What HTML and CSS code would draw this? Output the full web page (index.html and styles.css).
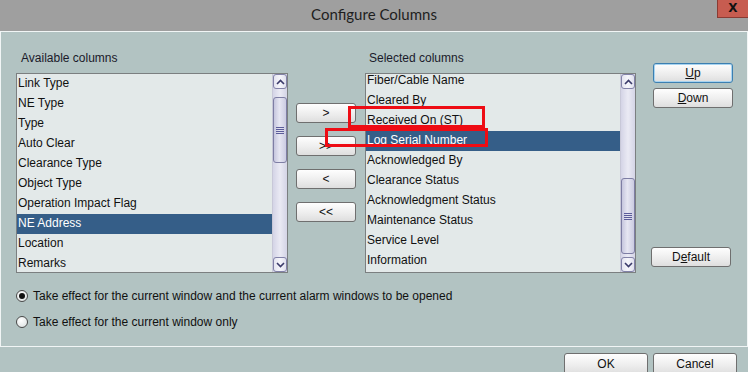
FILE: index.html
```html
<!DOCTYPE html>
<html lang="en">
<head>
  <meta charset="UTF-8">
  <title>Configure Columns</title>
  <link rel="stylesheet" href="styles.css">
</head>
<body>
  <div class="titlebar">
    <span class="title">Configure Columns</span>
    <div class="close-btn">X</div>
  </div>

  <div class="panel">
    <div class="columns">
      <div class="label label-left">Available columns</div>
      <div class="label label-right">Selected columns</div>

      <div class="listbox list-left">
        <ul class="items">
          <li>Link Type</li>
          <li>NE Type</li>
          <li>Type</li>
          <li>Auto Clear</li>
          <li>Clearance Type</li>
          <li>Object Type</li>
          <li>Operation Impact Flag</li>
          <li class="selected">NE Address</li>
          <li>Location</li>
          <li>Remarks</li>
        </ul>
        <div class="scrollbar">
          <div class="arrow">
            <svg width="9" height="6" viewBox="0 0 9 6"><polyline points="1,5 4.5,1.5 8,5" fill="none" stroke="#3a3a6a" stroke-width="1.6"/></svg>
          </div>
          <div class="track">
            <div class="thumb thumb-left"><span class="grip"></span></div>
          </div>
          <div class="arrow">
            <svg width="9" height="6" viewBox="0 0 9 6"><polyline points="1,1 4.5,4.5 8,1" fill="none" stroke="#3a3a6a" stroke-width="1.6"/></svg>
          </div>
        </div>
      </div>

      <div class="move-buttons">
        <button class="btn">&gt;</button>
        <button class="btn">&gt;&gt;</button>
        <button class="btn">&lt;</button>
        <button class="btn">&lt;&lt;</button>
      </div>

      <div class="listbox list-right">
        <ul class="items scrolled">
          <li>Fiber/Cable Name</li>
          <li>Cleared By</li>
          <li>Received On (ST)</li>
          <li class="selected">Log Serial Number</li>
          <li>Acknowledged By</li>
          <li>Clearance Status</li>
          <li>Acknowledgment Status</li>
          <li>Maintenance Status</li>
          <li>Service Level</li>
          <li>Information</li>
        </ul>
        <div class="scrollbar">
          <div class="arrow">
            <svg width="9" height="6" viewBox="0 0 9 6"><polyline points="1,5 4.5,1.5 8,5" fill="none" stroke="#3a3a6a" stroke-width="1.6"/></svg>
          </div>
          <div class="track">
            <div class="thumb thumb-right"><span class="grip"></span></div>
          </div>
          <div class="arrow">
            <svg width="9" height="6" viewBox="0 0 9 6"><polyline points="1,1 4.5,4.5 8,1" fill="none" stroke="#3a3a6a" stroke-width="1.6"/></svg>
          </div>
        </div>
      </div>

      <div class="side-buttons">
        <button class="btn side-btn focused"><u>U</u>p</button>
        <button class="btn side-btn"><u>D</u>own</button>
        <button class="btn side-btn default-btn">D<u>e</u>fault</button>
      </div>
    </div>

    <div class="options">
      <label class="radio-row"><span class="radio checked"></span>Take effect for the current window and the current alarm windows to be opened</label>
      <label class="radio-row"><span class="radio"></span>Take effect for the current window only</label>
    </div>
  </div>

  <div class="footer">
    <button class="btn footer-btn">OK</button>
    <button class="btn footer-btn">Cancel</button>
  </div>

  <!-- annotation boxes drawn over the screenshot -->
  <div class="mark mark-1"></div>
  <div class="mark mark-2"></div>
</body>
</html>
```

FILE: styles.css
```css
* {
  margin: 0;
  padding: 0;
  box-sizing: border-box;
}

body {
  width: 748px;
  height: 372px;
  overflow: hidden;
  position: relative;
  background: #b2c3c2;
  font-family: 'Liberation Sans', Arial, sans-serif;
  font-size: 12px;
  color: #1a1a2a;
}

.titlebar {
  height: 31px;
  background: #9f9f9f;
  display: flex;
  justify-content: center;
  align-items: center;
  position: relative;
}

.title {
  font-family: 'Lato', 'Open Sans', sans-serif;
  font-size: 15px;
  color: #1e1e1e;
  margin-top: -4px;
}

.close-btn {
  position: absolute;
  top: 0;
  right: 0;
  width: 31px;
  height: 18px;
  background: #c75c50;
  border: 1px solid #8a3b33;
  border-top: none;
  border-right: none;
  color: #111;
  font-family: 'DejaVu Sans', sans-serif;
  font-weight: bold;
  font-size: 12px;
  line-height: 17px;
  text-align: center;
}

.panel {
  height: 316px;
  border: 1px solid #f1f5f5;
  padding: 19px 0 0 15px;
}

.columns {
  display: grid;
  grid-template-columns: 272px 77px 271px 1fr;
  grid-template-rows: 22px 200px;
}

.label {
  line-height: 14px;
}

.label-left {
  grid-column: 1;
  padding-left: 5px;
}

.label-right {
  grid-column: 3;
  padding-left: 4px;
}

.listbox {
  grid-row: 2;
  display: flex;
  border: 1px solid #7b7f80;
  background: #e3e9e9;
  height: 200px;
  overflow: hidden;
}

.list-left {
  grid-column: 1;
}

.list-right {
  grid-column: 3;
}

.items {
  list-style: none;
  flex: 1;
  overflow: hidden;
}

.items.scrolled {
  margin-top: -3px;
}

.items li {
  height: 20px;
  line-height: 19px;
  padding-left: 1px;
  white-space: nowrap;
  color: #111;
}

.items li.selected {
  background: #355e88;
  color: #fff;
}

.scrollbar {
  width: 15px;
  display: flex;
  flex-direction: column;
  background: linear-gradient(90deg, #d4d4e6, #eaeaf4 50%, #d4d4e6);
  border-left: 1px solid #c8c8d8;
}

.arrow {
  height: 15px;
  border: 1px solid #8282a8;
  border-radius: 3px;
  background: linear-gradient(90deg, #e4e4f0, #f6f6fb 50%, #e0e0ee);
  display: flex;
  align-items: center;
  justify-content: center;
}

.track {
  flex: 1;
  padding-top: 8px;
}

.thumb {
  border: 1px solid #7e7ea4;
  border-radius: 3px;
  background: linear-gradient(90deg, #c6c6de, #e6e6f2 45%, #cbcbe2);
  display: flex;
  align-items: center;
  justify-content: center;
}

.thumb-left {
  height: 66px;
}

.thumb-right {
  height: 76px;
  margin-top: 81px;
}

.grip {
  width: 8px;
  height: 7px;
  background: repeating-linear-gradient(#5c5c9a 0, #5c5c9a 1px, transparent 1px, transparent 2px);
}

.btn {
  font-family: 'Liberation Sans', Arial, sans-serif;
  font-size: 12px;
  color: #111;
  height: 20px;
  border: 1px solid #6f6f6f;
  border-radius: 3px;
  background: linear-gradient(#fefefe, #ececec 60%, #dedede);
}

.btn u {
  text-decoration: underline;
}

.move-buttons {
  grid-row: 2;
  grid-column: 2;
  display: flex;
  flex-direction: column;
  gap: 13px;
  padding: 30px 0 0 8px;
}

.move-buttons .btn {
  width: 60px;
}

.side-buttons {
  grid-row: 1 / 3;
  grid-column: 4;
  display: flex;
  flex-direction: column;
  padding: 12px 0 6px 0;
  gap: 5px;
}

.side-btn {
  width: 80px;
  margin-left: 17px;
}

.side-btn.focused {
  border-color: #3c7fb1;
  box-shadow: inset 0 0 0 1px #a8d4f0;
}

.default-btn {
  margin-top: auto;
  margin-left: 15px;
}

.options {
  padding-top: 13px;
  display: flex;
  flex-direction: column;
  gap: 6px;
}

.radio-row {
  display: flex;
  align-items: center;
  height: 20px;
  gap: 5px;
  color: #111;
}

.radio {
  width: 12px;
  height: 12px;
  border-radius: 50%;
  border: 1px solid #4a4a4a;
  background: radial-gradient(circle at 40% 35%, #ffffff, #d8dede);
  display: flex;
  align-items: center;
  justify-content: center;
}

.radio.checked::after {
  content: '';
  width: 6px;
  height: 6px;
  border-radius: 50%;
  background: #111;
}

.footer {
  display: flex;
  justify-content: flex-end;
  gap: 5px;
  padding: 6px 11px 0 0;
}

.footer-btn {
  width: 84px;
  height: 22px;
}

.mark {
  position: absolute;
  border: 3px solid #ee0c14;
}

.mark-1 {
  left: 348px;
  top: 106px;
  width: 137px;
  height: 22px;
}

.mark-2 {
  left: 325px;
  top: 128px;
  width: 163px;
  height: 19px;
}
```
